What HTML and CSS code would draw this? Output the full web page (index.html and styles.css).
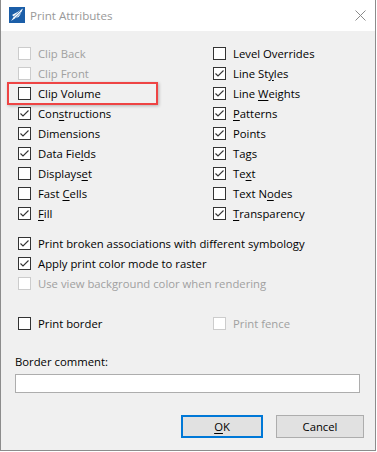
FILE: index.html
```html
<!DOCTYPE html>
<html>
<head>
<meta charset="utf-8">
<link rel="stylesheet" href="styles.css">
</head>
<body>
<div class="window">
  <div class="titlebar">
    <svg class="app-icon" width="16" height="16" viewBox="0 0 16 16">
      <rect width="16" height="16" fill="#1b5ea8"/>
      <path d="M2 14 L5 9.5 L3 8 L8.5 5 L14 1.5 L11 8 L9.5 10 L6.5 11 Z" fill="#ffffff"/>
      <path d="M5 9.5 L11.5 3.5 M6.5 11 L12.5 5" stroke="#1b5ea8" stroke-width="0.8" fill="none"/>
    </svg>
    <span class="title">Print Attributes</span>
    <svg class="close" width="11" height="11" viewBox="0 0 11 11">
      <path d="M0.5 0.5 L10.5 10.5 M10.5 0.5 L0.5 10.5" stroke="#8a8a8a" stroke-width="1" fill="none"/>
    </svg>
  </div>
  <div class="body">
    <div class="grid">
      <div class="col">
        <div class="row disabled"><span class="box"></span><span>Clip Back</span></div>
        <div class="row disabled"><span class="box"></span><span>Clip Front</span></div>
        <div class="row"><span class="box"></span><span>Clip Volume</span></div>
        <div class="row"><span class="box"><svg viewBox="0 0 11 11"><path d="M1.5 5.5 L4 8 L9.5 2.5" /></svg></span><span>Con<u>s</u>tructions</span></div>
        <div class="row"><span class="box"><svg viewBox="0 0 11 11"><path d="M1.5 5.5 L4 8 L9.5 2.5" /></svg></span><span>Dimensions</span></div>
        <div class="row"><span class="box"><svg viewBox="0 0 11 11"><path d="M1.5 5.5 L4 8 L9.5 2.5" /></svg></span><span>Data Fie<u>l</u>ds</span></div>
        <div class="row"><span class="box"></span><span>Displays<u>e</u>t</span></div>
        <div class="row"><span class="box"></span><span>Fast <u>C</u>ells</span></div>
        <div class="row"><span class="box"><svg viewBox="0 0 11 11"><path d="M1.5 5.5 L4 8 L9.5 2.5" /></svg></span><span><u>F</u>ill</span></div>
      </div>
      <div class="col">
        <div class="row"><span class="box"></span><span>Level Overrides</span></div>
        <div class="row"><span class="box"><svg viewBox="0 0 11 11"><path d="M1.5 5.5 L4 8 L9.5 2.5" /></svg></span><span>Line St<u>y</u>les</span></div>
        <div class="row"><span class="box"><svg viewBox="0 0 11 11"><path d="M1.5 5.5 L4 8 L9.5 2.5" /></svg></span><span>Line <u>W</u>eights</span></div>
        <div class="row"><span class="box"><svg viewBox="0 0 11 11"><path d="M1.5 5.5 L4 8 L9.5 2.5" /></svg></span><span><u>P</u>atterns</span></div>
        <div class="row"><span class="box"><svg viewBox="0 0 11 11"><path d="M1.5 5.5 L4 8 L9.5 2.5" /></svg></span><span>Points</span></div>
        <div class="row"><span class="box"><svg viewBox="0 0 11 11"><path d="M1.5 5.5 L4 8 L9.5 2.5" /></svg></span><span>Tags</span></div>
        <div class="row"><span class="box"><svg viewBox="0 0 11 11"><path d="M1.5 5.5 L4 8 L9.5 2.5" /></svg></span><span>Te<u>x</u>t</span></div>
        <div class="row"><span class="box"></span><span>Text N<u>o</u>des</span></div>
        <div class="row"><span class="box"><svg viewBox="0 0 11 11"><path d="M1.5 5.5 L4 8 L9.5 2.5" /></svg></span><span><u>T</u>ransparency</span></div>
      </div>
    </div>
    <div class="opts">
      <div class="row"><span class="box"><svg viewBox="0 0 11 11"><path d="M1.5 5.5 L4 8 L9.5 2.5" /></svg></span><span>Print broken associations with different symbology</span></div>
      <div class="row"><span class="box"><svg viewBox="0 0 11 11"><path d="M1.5 5.5 L4 8 L9.5 2.5" /></svg></span><span>Apply print color mode to raster</span></div>
      <div class="row disabled"><span class="box"></span><span>Use view background color when rendering</span></div>
    </div>
    <div class="grid border-row">
      <div class="col">
        <div class="row"><span class="box"></span><span>Print border</span></div>
      </div>
      <div class="col">
        <div class="row disabled"><span class="box"></span><span>Print fence</span></div>
      </div>
    </div>
    <div class="comment-label">Border comment:</div>
    <div class="input"></div>
    <div class="buttons">
      <div class="btn default"><u>O</u>K</div>
      <div class="btn cancel">Cancel</div>
    </div>
  </div>
  <div class="highlight"></div>
</div>
</body>
</html>
```
FILE: styles.css
```css
html, body {
  margin: 0;
  padding: 0;
  background: #ffffff;
}
body {
  font-family: "Open Sans", "Noto Sans", sans-serif;
  font-size: 11.3px;
  color: #000000;
}
.window {
  position: relative;
  width: 374px;
  height: 450px;
  border: 1px solid #8c8c8c;
  border-top: none;
  background: #f0f0f0;
  display: flex;
  flex-direction: column;
}
.titlebar {
  height: 31px;
  background: #ffffff;
  display: flex;
  align-items: center;
  padding-left: 8px;
  padding-right: 9px;
}
.app-icon {
  margin-top: -1px;
}
.title {
  margin-left: 5px;
  font-size: 11.6px;
  color: #999999;
  flex: 1;
}
.close {
  margin-top: -1px;
}
.body {
  flex: 1;
  padding: 12px 0 0 17px;
}
.grid {
  display: grid;
  grid-template-columns: 195px 1fr;
}
.row {
  height: 20px;
  display: flex;
  align-items: center;
  gap: 7px;
  white-space: nowrap;
}
.box {
  width: 11px;
  height: 11px;
  border: 1px solid #333333;
  background: #ffffff;
  flex: none;
  display: flex;
}
.box svg {
  width: 11px;
  height: 11px;
}
.box path {
  stroke: #333333;
  stroke-width: 1.1;
  fill: none;
}
.row.disabled {
  color: #a0a0a0;
}
.row.disabled .box {
  border-color: #cccccc;
}
u {
  text-decoration: underline;
  text-underline-offset: 2px;
}
.opts {
  margin-top: 10px;
}
.border-row {
  margin-top: 20px;
}
.comment-label {
  margin-left: -3px;
  margin-top: 21px;
  line-height: 16px;
}
.input {
  margin-left: -3px;
  margin-top: 4px;
  width: 343px;
  height: 17px;
  border: 1px solid #adadad;
  background: #ffffff;
}
.buttons {
  display: flex;
  gap: 13px;
  margin-left: 163px;
  margin-top: 22px;
}
.btn {
  height: 21px;
  display: flex;
  align-items: center;
  justify-content: center;
  background: #e1e1e1;
  border: 1px solid #adadad;
}
.btn.default {
  width: 78px;
  height: 19px;
  border: 2px solid #0078d7;
}
.btn.cancel {
  width: 86px;
}
.highlight {
  position: absolute;
  left: 6px;
  top: 82px;
  width: 147px;
  height: 19px;
  border: 2px solid #ee4444;
  box-shadow: 1px 1px 3px rgba(0, 0, 0, 0.25);
}
```
